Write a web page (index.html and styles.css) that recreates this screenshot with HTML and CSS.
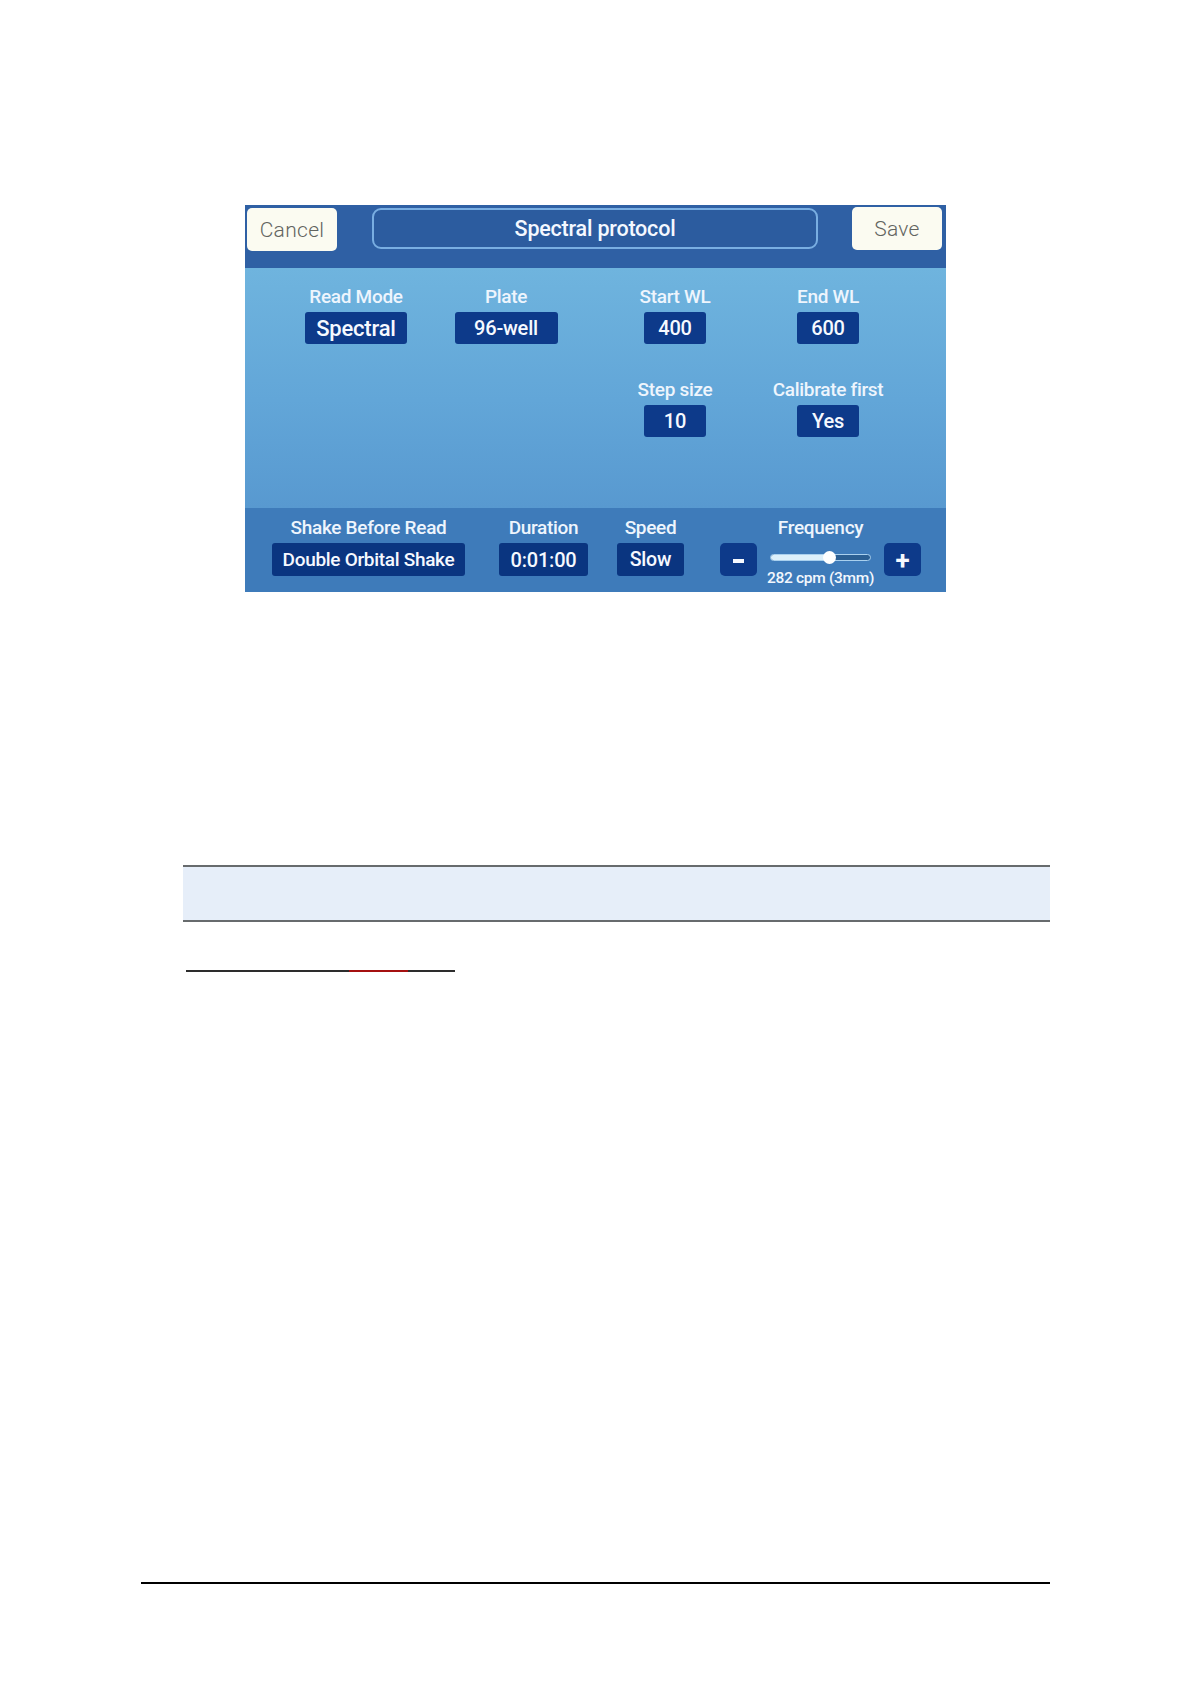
FILE: index.html
```html
<!DOCTYPE html>
<html>
<head>
<meta charset="utf-8">
<link rel="stylesheet" href="styles.css">
</head>
<body>
<div class="page">
  <div class="screen">
    <div class="header">
      <div class="btn-light cancel">Cancel</div>
      <div class="title">Spectral protocol</div>
      <div class="btn-light save">Save</div>
    </div>
    <div class="main">
      <div class="grid">
        <div class="cell"><div class="label">Read Mode</div><div class="val big w-spectral">Spectral</div></div>
        <div class="cell"><div class="label">Plate</div><div class="val w-plate">96-well</div></div>
        <div class="cell"><div class="label">Start WL</div><div class="val w-num">400</div></div>
        <div class="cell"><div class="label">End WL</div><div class="val w-num">600</div></div>
        <div class="cell"></div>
        <div class="cell"></div>
        <div class="cell row2"><div class="label">Step size</div><div class="val w-num">10</div></div>
        <div class="cell row2"><div class="label">Calibrate first</div><div class="val w-num">Yes</div></div>
      </div>
    </div>
    <div class="bottom">
      <div class="bcol c-shake"><div class="label">Shake Before Read</div><div class="val bval">Double Orbital Shake</div></div>
      <div class="bcol c-dur"><div class="label">Duration</div><div class="val bval">0:01:00</div></div>
      <div class="bcol c-speed"><div class="label">Speed</div><div class="val bval">Slow</div></div>
      <div class="bcol c-freq">
        <div class="label">Frequency</div>
        <div class="freq-row">
          <div class="val sq minus"><span class="dash"></span></div>
          <div class="slider">
            <div class="track"><div class="fill"></div><div class="thumb"></div></div>
            <div class="caption">282 cpm (3mm)</div>
          </div>
          <div class="val sq plus">+</div>
        </div>
      </div>
    </div>
  </div>

  <div class="band"></div>
  <div class="shortline"><span class="seg1"></span><span class="seg2"></span><span class="seg3"></span></div>
  <div class="footline"></div>
</div>
</body>
</html>
```

FILE: styles.css
```css
html, body {
  margin: 0;
  padding: 0;
  background: #ffffff;
}
.page {
  width: 1191px;
  height: 1683px;
  position: relative;
  font-family: Roboto, "Liberation Sans", sans-serif;
  padding-top: 205px;
  box-sizing: border-box;
}
.screen {
  margin-left: 245px;
  width: 701px;
  height: 387px;
  display: flex;
  flex-direction: column;
  overflow: hidden;
}
.header {
  height: 63px;
  box-sizing: border-box;
  background: #2f60a4;
  display: flex;
  align-items: flex-start;
  padding: 2px 4px 0 2px;
}
.btn-light {
  width: 90px;
  height: 43px;
  background: #fbfbf1;
  border-radius: 5px;
  color: #62645f;
  font-size: 21px;
  font-weight: 300;
  display: flex;
  align-items: center;
  justify-content: center;
  letter-spacing: 0.3px;
}
.cancel { margin-top: 1px; }
.title {
  margin-left: 35px;
  margin-top: 1px;
  width: 446px;
  height: 41px;
  box-sizing: border-box;
  border: 2px solid #79aee2;
  border-radius: 9px;
  background: #2c5c9f;
  color: #f4f8ff;
  font-size: 21.5px;
  font-weight: 500;
  display: flex;
  align-items: center;
  justify-content: center;
  letter-spacing: -0.2px;
}
.save { margin-left: 34px; }

.main {
  height: 240px;
  background: linear-gradient(180deg, #6fb4de 0%, #62a6d8 55%, #5899d0 100%);
  box-sizing: border-box;
  padding: 19px 0 0 36px;
}
.grid {
  display: grid;
  grid-template-columns: 150px 150px 188px 118px;
  grid-auto-rows: auto;
  row-gap: 36px;
}
.cell {
  display: flex;
  flex-direction: column;
  align-items: center;
  gap: 5px;
}
.label {
  color: #eef5fd;
  font-size: 19px;
  font-weight: 500;
  line-height: 20px;
  letter-spacing: -0.3px;
  white-space: nowrap;
}
.val {
  background: #0d3a8a;
  color: #f6f9ff;
  border-radius: 3px;
  height: 32px;
  display: flex;
  align-items: center;
  justify-content: center;
  font-size: 20px;
  font-weight: 500;
  white-space: nowrap;
  letter-spacing: -0.2px;
}
.big { font-size: 22px; }
.w-spectral { width: 102px; }
.w-plate { width: 103px; }
.w-num { width: 62px; }

.bottom {
  flex: 1;
  background: #3e7bba;
  display: flex;
  align-items: flex-start;
  padding: 10px 0 0 27px;
  box-sizing: border-box;
}
.bcol {
  display: flex;
  flex-direction: column;
  align-items: center;
  gap: 5px;
}
.bval {
  height: 33px;
  background: #0a3580;
}
.c-shake .bval { width: 193px; font-size: 19px; letter-spacing: -0.3px; }
.c-dur { margin-left: 34px; }
.c-dur .bval { width: 89px; }
.c-speed { margin-left: 29px; }
.c-speed .bval { width: 67px; font-size: 19.5px; }
.c-freq { margin-left: 36px; }
.freq-row {
  display: flex;
  align-items: flex-start;
}
.sq {
  width: 37px;
  height: 33px;
  border-radius: 5px;
  font-size: 26px;
  font-weight: 700;
}
.dash {
  display: block;
  width: 11px;
  height: 4px;
  background: #f6f9ff;
  margin-top: 2px;
}
.slider {
  width: 127px;
  display: flex;
  flex-direction: column;
  align-items: center;
}
.track {
  margin-top: 11px;
  width: 101px;
  height: 7px;
  border-radius: 4px;
  background: #2b5f93;
  border: 1px solid #a9d0ee;
  box-sizing: border-box;
  position: relative;
}
.fill {
  width: 59px;
  height: 100%;
  border-radius: 4px 0 0 4px;
  background: #dcf0fb;
}
.thumb {
  position: absolute;
  left: 52px;
  top: -4px;
  width: 13px;
  height: 13px;
  border-radius: 50%;
  background: #ffffff;
}
.caption {
  margin-top: 8px;
  color: #f2f7fd;
  font-size: 15.5px;
  font-weight: 500;
  white-space: nowrap;
  letter-spacing: -0.3px;
}

.band {
  margin-top: 273px;
  margin-left: 183px;
  width: 867px;
  height: 57px;
  box-sizing: border-box;
  border-top: 2px solid #676b6d;
  border-bottom: 2px solid #676b6d;
  background: #e6eef9;
}
.shortline {
  margin-top: 48px;
  margin-left: 186px;
  display: flex;
  height: 2px;
}
.shortline span { display: block; height: 2px; }
.seg1 { width: 163px; background: #2d2d2d; }
.seg2 { width: 59px; background: #a51010; }
.seg3 { width: 47px; background: #2d2d2d; }
.footline {
  margin-top: 610px;
  margin-left: 141px;
  width: 909px;
  height: 2px;
  background: #000;
}
```
